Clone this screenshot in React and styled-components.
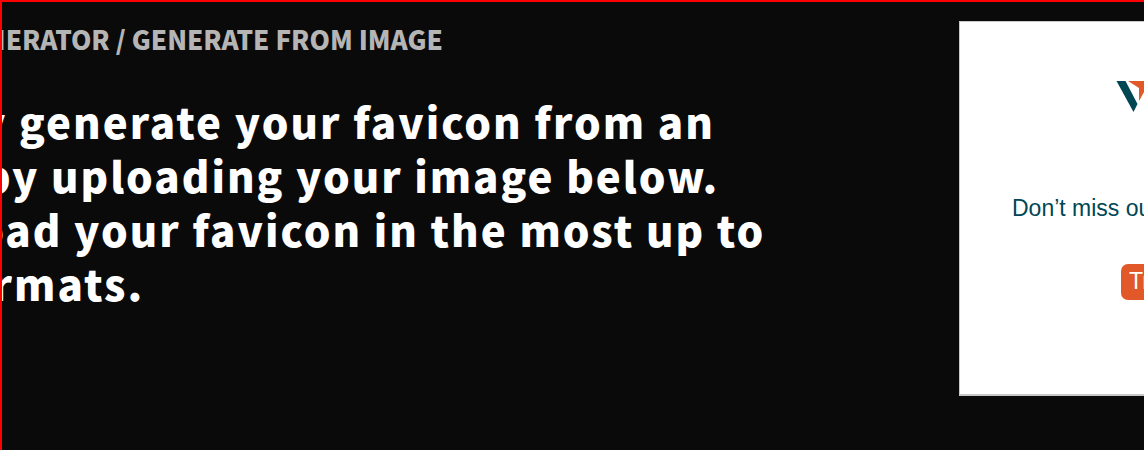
import React from "react";
import styled, { createGlobalStyle } from "styled-components";

const GlobalStyle = createGlobalStyle`
  *, *::before, *::after { box-sizing: border-box; }
  body { margin: 0; background: #0a0a0a; }
`;

const Hero = styled.main`
  display: flex;
  align-items: flex-start;
  min-height: 100vh;
  overflow: hidden;
  padding-top: 19px;
  border-top: 2px solid #ff0000;
  border-left: 2px solid #ff0000;
  background: #0a0a0a;
  color: #ffffff;
  font-family: "Noto Sans CJK JP", "Noto Sans", sans-serif;
`;

const Intro = styled.div`
  flex: 1;
  min-width: 0;
  margin: -2px 0 0 -171px;
  white-space: nowrap;
`;

const Breadcrumb = styled.nav`
  color: #b5b5b5;
  font-size: 26px;
  font-weight: 900;
  line-height: 40px;
  text-transform: uppercase;
`;

const Title = styled.h1`
  margin: 35px 0 0;
  font-size: 42px;
  font-weight: 900;
  line-height: 54px;
  letter-spacing: 2px;
`;

const Line = styled.span`
  display: block;
`;

const Card = styled.aside`
  display: flex;
  flex: 0 0 400px;
  flex-direction: column;
  align-items: flex-start;
  margin-right: -215px;
  padding: 59px 0 94px;
  border: 1px solid #c8c8c8;
  border-bottom-width: 2px;
  background: #ffffff;
  color: #004754;
  font-family: "Liberation Sans", Arial, sans-serif;
  font-size: 23px;
  font-weight: 400;
  line-height: 28px;
`;

const Logo = styled.svg`
  display: block;
  margin-left: 157px;
  overflow: visible;
`;

const Message = styled.p`
  margin: 82px 0 0 52px;
  white-space: nowrap;
`;

const Action = styled.button`
  height: 36px;
  margin: 42px 0 0 161px;
  padding: 0 8px 2px;
  border: 0;
  border-radius: 7px;
  background: #e15829;
  color: #ffffff;
  font: inherit;
`;

export default function App() {
  return (
    <>
      <GlobalStyle />
      <Hero>
        <Intro>
          <Breadcrumb>Favicon Generator / Generate from Image</Breadcrumb>
          <Title>
            <Line>Quickly generate your favicon from an</Line>
            <Line>image by uploading your image below.</Line>
            <Line>Download your favicon in the most up to</Line>
            <Line>date formats.</Line>
          </Title>
        </Intro>
        <Card>
          <Logo width="44" height="31" viewBox="0 0 44 31" aria-hidden="true">
            <path d="M-.5 0H8.5L20.5 23L16.5 31Z" fill="#004754" />
            <path d="M11 0H33L22 20V7Z" fill="#e15829" />
          </Logo>
          <Message>Don’t miss out</Message>
          <Action type="button">Try</Action>
        </Card>
      </Hero>
    </>
  );
}
